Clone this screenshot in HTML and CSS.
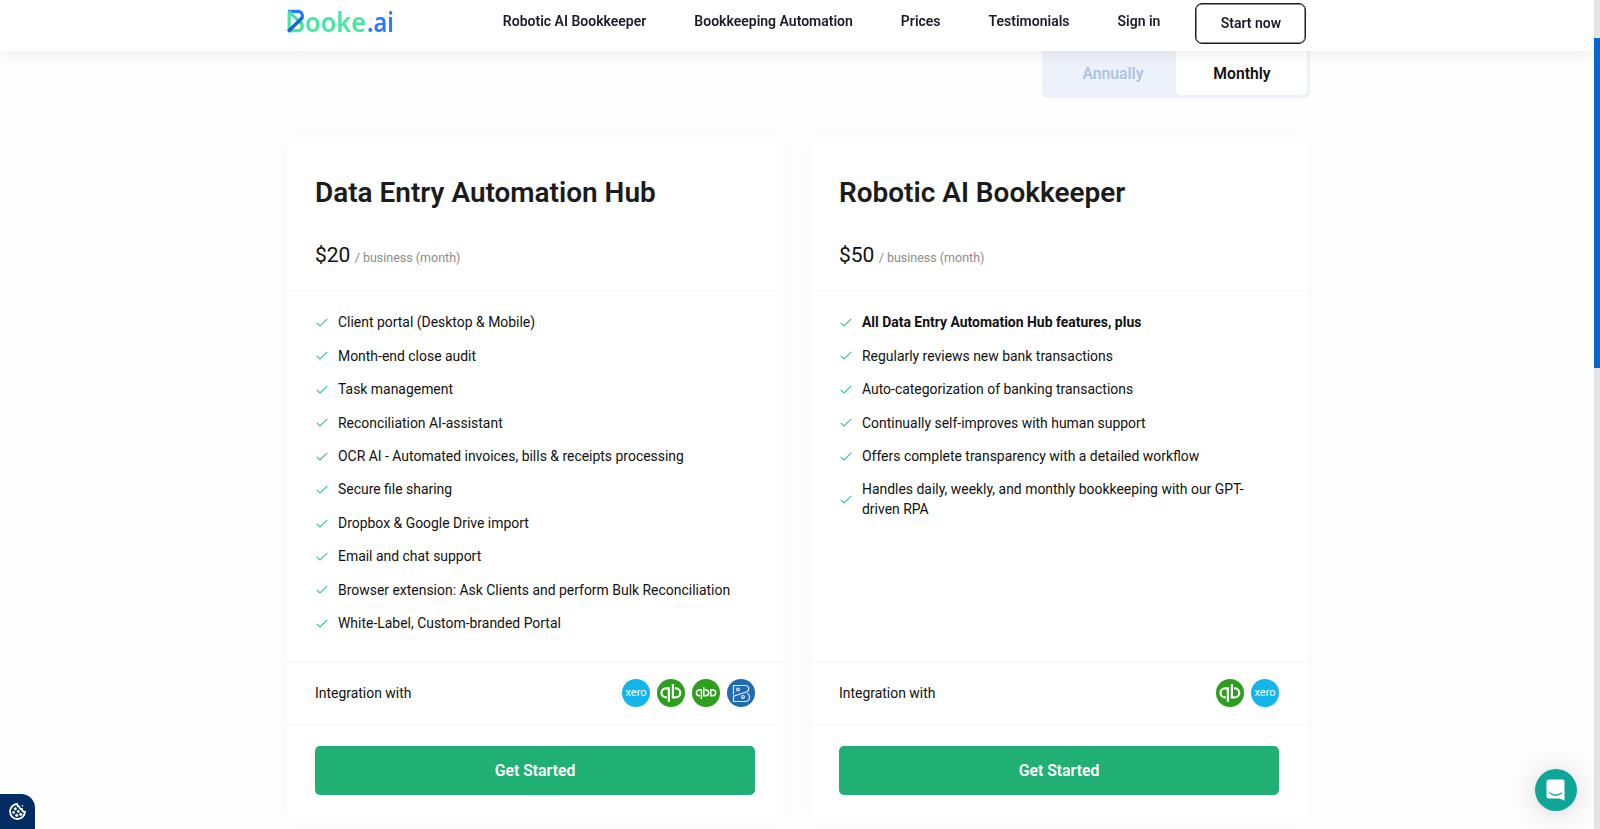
FILE: index.html
```html
<!DOCTYPE html>
<html lang="en">
<head>
  <meta charset="UTF-8" />
  <meta name="viewport" content="width=device-width, initial-scale=1.0"/>
  <title>Booke.ai - Prices</title>
  <link rel="stylesheet" href="styles.css">
</head>
<body>
  <!-- shared icons -->
  <svg class="sprite" aria-hidden="true">
    <symbol id="check" viewBox="0 0 12 9">
      <path d="M.7 4.8 4 8 11.3.8" fill="none" stroke="#3cc48a" stroke-width="1.15"/>
    </symbol>
    <symbol id="qb" viewBox="0 0 28 28">
      <circle cx="14" cy="14" r="14" fill="#2ca01c"/>
      <g fill="none" stroke="#fff" stroke-width="2.2">
        <path d="M9.8 18.4H9a4.5 4.5 0 0 1 0-9h2.9V22.7"/>
        <path d="M18 9.4h.8a4.5 4.5 0 0 1 0 9h-2.9V5.1"/>
      </g>
    </symbol>
    <symbol id="qbd" viewBox="0 0 28 28">
      <circle cx="14" cy="14" r="14" fill="#2ca01c"/>
      <g fill="none" stroke="#fff" stroke-width="1.5">
        <path d="M8 16.7H7.3a2.9 2.9 0 0 1 0-5.8h2.1V20"/>
        <path d="M13 10.9h.8a2.9 2.9 0 0 1 0 5.8h-2V8.2"/>
        <path d="M18.8 10.9h2a2.9 2.9 0 0 1 0 5.8h-2z"/>
      </g>
    </symbol>
    <symbol id="booke" viewBox="0 0 28 28">
      <circle cx="14" cy="14" r="14" fill="#1f6bb5"/>
      <g fill="none" stroke="#dcebfa" stroke-width="1.2">
        <path d="M6.5 15.5v-9h12a3.3 3.3 0 0 1 1.5 6.2L6.5 17.3v5.2h12a4.3 4.3 0 0 0 1.5-8.2"/>
        <circle cx="11" cy="10.5" r="1.4"/>
        <circle cx="16" cy="17.9" r="1.4"/>
      </g>
    </symbol>
  </svg>

  <header class="header">
    <div class="header-inner">
      <a class="logo" href="#">
        <svg width="110" height="46" viewBox="0 0 110 46">
          <path d="M2.2 12v18.6h8.300a4.600 4.600 0 0 0 2-8.800" fill="none" stroke="#45e8a2" stroke-width="3.2"/>
          <path d="M1 11.300h10a4.500 4.500 0 0 1 3.500 7.200" fill="none" stroke="#2a7bff" stroke-width="3.2"/>
          <path d="M1.500 11 15 24" stroke="#3ee0a5" stroke-width="2.8"/>
          <path d="M1.200 31.500 15.500 17.500" stroke="#1463e8" stroke-width="3.4"/>
          <text x="18" y="32" textLength="61" lengthAdjust="spacingAndGlyphs" class="logo-text">ooke</text>
          <text x="80" y="32" textLength="27" lengthAdjust="spacingAndGlyphs" class="logo-text logo-ai">.ai</text>
        </svg>
      </a>
      <nav class="nav">
        <a href="#">Robotic AI Bookkeeper</a>
        <a href="#">Bookkeeping Automation</a>
        <a href="#">Prices</a>
        <a href="#">Testimonials</a>
        <a href="#">Sign in</a>
      </nav>
      <a class="start-btn" href="#">Start now</a>
    </div>
  </header>

  <main class="container">
    <div class="period">
      <button class="period-btn">Annually</button>
      <button class="period-btn active">Monthly</button>
    </div>

    <div class="plans">
      <section class="plan">
        <div class="plan-head">
          <h2>Data Entry Automation Hub</h2>
          <p class="price">$20 <span>/ business (month)</span></p>
        </div>
        <ul class="features">
          <li><svg><use href="#check"/></svg><span>Client portal (Desktop &amp; Mobile)</span></li>
          <li><svg><use href="#check"/></svg><span>Month-end close audit</span></li>
          <li><svg><use href="#check"/></svg><span>Task management</span></li>
          <li><svg><use href="#check"/></svg><span>Reconciliation AI-assistant</span></li>
          <li><svg><use href="#check"/></svg><span>OCR AI - Automated invoices, bills &amp; receipts processing</span></li>
          <li><svg><use href="#check"/></svg><span>Secure file sharing</span></li>
          <li><svg><use href="#check"/></svg><span>Dropbox &amp; Google Drive import</span></li>
          <li><svg><use href="#check"/></svg><span>Email and chat support</span></li>
          <li><svg><use href="#check"/></svg><span>Browser extension: Ask Clients and perform Bulk Reconciliation</span></li>
          <li><svg><use href="#check"/></svg><span>White-Label, Custom-branded Portal</span></li>
        </ul>
        <div class="integration">
          <span>Integration with</span>
          <div class="apps">
            <div class="xero">xero</div>
            <svg><use href="#qb"/></svg>
            <svg><use href="#qbd"/></svg>
            <svg><use href="#booke"/></svg>
          </div>
        </div>
        <div class="plan-action"><a class="get-started" href="#">Get Started</a></div>
      </section>

      <section class="plan">
        <div class="plan-head">
          <h2>Robotic AI Bookkeeper</h2>
          <p class="price">$50 <span>/ business (month)</span></p>
        </div>
        <ul class="features">
          <li><svg><use href="#check"/></svg><b>All Data Entry Automation Hub features, plus</b></li>
          <li><svg><use href="#check"/></svg><span>Regularly reviews new bank transactions</span></li>
          <li><svg><use href="#check"/></svg><span>Auto-categorization of banking transactions</span></li>
          <li><svg><use href="#check"/></svg><span>Continually self-improves with human support</span></li>
          <li><svg><use href="#check"/></svg><span>Offers complete transparency with a detailed workflow</span></li>
          <li><svg><use href="#check"/></svg><span>Handles daily, weekly, and monthly bookkeeping with our GPT-driven RPA</span></li>
        </ul>
        <div class="integration">
          <span>Integration with</span>
          <div class="apps">
            <svg><use href="#qb"/></svg>
            <div class="xero">xero</div>
          </div>
        </div>
        <div class="plan-action"><a class="get-started" href="#">Get Started</a></div>
      </section>
    </div>
  </main>

  <button class="cookie-btn" aria-label="Cookie settings">
    <svg width="17" height="17" viewBox="0 0 17 17">
      <path d="M8.2 1A7.5 7.5 0 1 0 16 8.8a2.6 2.6 0 0 1-3-2.6 2.6 2.6 0 0 1-2.7-2.5A2.6 2.6 0 0 1 8.2 1z" fill="none" stroke="#fff" stroke-width="1.8"/>
      <g fill="#fff">
        <circle cx="6.3" cy="5.7" r="1.5"/>
        <circle cx="4.6" cy="9.5" r="1.4"/>
        <circle cx="9.3" cy="8.5" r="1.4"/>
        <circle cx="7.7" cy="12.3" r="1.5"/>
        <circle cx="11.7" cy="11.3" r="1.5"/>
        <circle cx="13.5" cy="2.8" r=".8"/>
      </g>
    </svg>
  </button>

  <button class="chat-btn" aria-label="Open chat">
    <svg width="20" height="22" viewBox="0 0 20 22">
      <path d="M2.5.5h14a2 2 0 0 1 2 2v19l-5-2h-11a2 2 0 0 1-2-2v-15a2 2 0 0 1 2-2z" fill="#fff"/>
      <path d="M3.8 14c3.5 2.7 8.2 2.7 11.7 0" fill="none" stroke="#0fa697" stroke-width="1.3" stroke-linecap="round"/>
    </svg>
  </button>

  <div class="scrollbar"><div class="scrollbar-thumb"></div></div>
</body>
</html>
```
FILE: styles.css
```css
* {
  box-sizing: border-box;
}

body {
  margin: 0;
  height: 829px;
  overflow: hidden;
  background: #fefefe;
  color: #111;
  font-family: Roboto, "Liberation Sans", sans-serif;
}

a {
  color: inherit;
  text-decoration: none;
}

button {
  border: none;
  padding: 0;
  font-family: inherit;
}

.sprite {
  position: absolute;
  width: 0;
  height: 0;
}

/* Header */
.header {
  position: fixed;
  top: 0;
  left: 0;
  right: 6px;
  z-index: 10;
  height: 51px;
  background: #fff;
  box-shadow: 0 2px 18px rgba(0, 0, 0, 0.08);
}

.header-inner {
  display: flex;
  align-items: flex-start;
  width: 1020px;
  margin: 0 auto;
  padding-right: 0.6px;
}

.logo svg {
  display: block;
}

.logo-text {
  font-family: "Noto Sans", sans-serif;
  font-size: 27px;
  font-weight: 600;
  fill: #45e8a2;
}

.logo-ai {
  fill: #2a7bff;
}

.nav {
  display: flex;
  gap: 48px;
  margin-left: auto;
  padding-top: 11px;
  font-size: 14px;
  font-weight: 600;
  line-height: 20px;
  color: #1c1b28;
}

.start-btn {
  width: 111px;
  height: 41px;
  margin: 3px 0 0 35px;
  border: 1.5px solid #1c1b28;
  border-radius: 7px;
  box-shadow: inset 0 0 0 0.5px #1c1b28;
  font-size: 14px;
  font-weight: 600;
  line-height: 38px;
  text-align: center;
  color: #1c1b28;
}

/* Plans */
.container {
  width: 1020px;
  margin-left: 287px;
  padding-top: 45px;
}

.period {
  display: flex;
  width: 268px;
  height: 53px;
  margin: 0 -3px 0 auto;
  padding: 3px;
  border-radius: 6px;
  background: #edf2fa;
}

.period-btn {
  width: 131px;
  padding-left: 5px;
  border-radius: 5px;
  background: none;
  font-size: 15.7px;
  font-weight: 600;
  line-height: 51px;
  color: #abc3e6;
}

.period-btn.active {
  padding-left: 1px;
  background: #fff;
  color: #111;
}

.plans {
  display: flex;
  gap: 28px;
  margin-top: 39px;
}

.plan {
  display: flex;
  flex: 1;
  flex-direction: column;
  height: 686px;
  border-radius: 8px;
  background: #fff;
  box-shadow: 0 0 24px rgba(0, 0, 0, 0.03);
}

.plan-head {
  height: 155px;
  padding: 37px 28px 0;
  border-bottom: 1px solid #f6f8f9;
}

.plan h2 {
  margin: 0;
  font-size: 27.95px;
  font-weight: 600;
  line-height: 38px;
  color: #1b1b1b;
}

.price {
  margin: 27px 0 0;
  font-size: 21px;
  line-height: 32px;
}

.price span {
  margin-left: -1px;
  font-size: 12.5px;
  color: #8b8b8b;
}

.features {
  flex: 1;
  margin: 0;
  padding: 21.2px 28px 0;
  list-style: none;
  font-size: 13.95px;
  line-height: 19.5px;
}

.features li {
  display: flex;
  align-items: center;
  gap: 10px;
  margin-bottom: 13.95px;
}

.features svg {
  flex: none;
  width: 12px;
  height: 9px;
  margin-left: 1px;
  margin-bottom: 1px;
}

.integration {
  display: flex;
  align-items: center;
  justify-content: space-between;
  height: 64px;
  padding: 0 28px;
  border-top: 1px solid #f4f7fa;
  border-bottom: 1px solid #f4f7fa;
  font-size: 13.95px;
}

.apps {
  display: flex;
  gap: 7px;
}

.apps svg {
  width: 28px;
  height: 28px;
}

.xero {
  width: 28px;
  height: 28px;
  border-radius: 50%;
  background: #13b5ea;
  font-size: 11px;
  line-height: 27px;
  text-align: center;
  color: #fff;
}

.plan-action {
  padding: 21px 28px 28px;
}

.get-started {
  display: block;
  border-radius: 5px;
  background: #21b073;
  font-size: 15.8px;
  font-weight: 600;
  line-height: 49px;
  text-align: center;
  color: #fff;
}

/* Floating buttons */
.cookie-btn {
  display: flex;
  align-items: center;
  position: fixed;
  left: 0;
  bottom: 0;
  width: 35px;
  height: 35px;
  padding-left: 9px;
  border-radius: 0 14px 0 0;
  background: #032d62;
}

.chat-btn {
  display: flex;
  align-items: center;
  justify-content: center;
  position: fixed;
  right: 23px;
  bottom: 18px;
  width: 42px;
  height: 42px;
  border-radius: 50%;
  background: #0fa697;
  box-shadow: 0 1px 6px rgba(0, 0, 0, 0.06), 0 2px 32px rgba(0, 0, 0, 0.16);
}

.scrollbar {
  position: fixed;
  top: 0;
  right: 0;
  bottom: 0;
  z-index: 20;
  width: 6px;
  padding-top: 38px;
  background: #e3e3e3;
}

.scrollbar-thumb {
  height: 330px;
  background: #0567d6;
}
```
